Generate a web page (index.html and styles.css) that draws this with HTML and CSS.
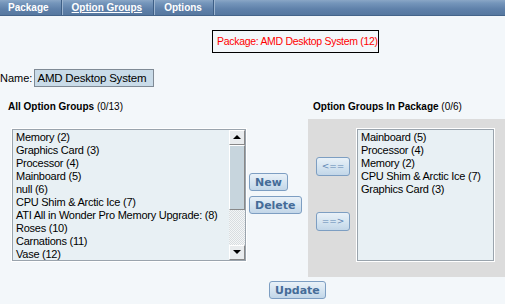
FILE: index.html
```html
<!DOCTYPE html>
<html lang="en">
<head>
    <meta charset="UTF-8">
    <title>Option Groups</title>
    <link rel="stylesheet" href="styles.css">
</head>
<body>
    <div class="tabs">
        <a class="tab">Package</a>
        <a class="tab active">Option Groups</a>
        <a class="tab">Options</a>
    </div>

    <div class="package-box">Package: AMD Desktop System (12)</div>

    <div class="name-row">
        <label for="pkgName">Name:</label>
        <input type="text" id="pkgName" value="AMD Desktop System">
    </div>

    <div class="groups">
        <div class="col-left">
            <h3>All Option Groups <span>(0/13)</span></h3>
            <div class="listbox">
                <ul class="items">
                    <li>Memory (2)</li>
                    <li>Graphics Card (3)</li>
                    <li>Processor (4)</li>
                    <li>Mainboard (5)</li>
                    <li>null (6)</li>
                    <li>CPU Shim &amp; Arctic Ice (7)</li>
                    <li>ATI All in Wonder Pro Memory Upgrade: (8)</li>
                    <li>Roses (10)</li>
                    <li>Carnations (11)</li>
                    <li>Vase (12)</li>
                </ul>
                <div class="scrollbar">
                    <span class="sb-btn up"></span>
                    <span class="sb-thumb"></span>
                    <span class="sb-track"></span>
                    <span class="sb-btn down"></span>
                </div>
            </div>
        </div>

        <div class="col-mid">
            <button class="btn">New</button>
            <button class="btn">Delete</button>
        </div>

        <div class="col-right">
            <h3>Option Groups In Package <span>(0/6)</span></h3>
            <div class="panel">
                <div class="arrows">
                    <button class="btn arrow">&lt;==</button>
                    <button class="btn arrow">==&gt;</button>
                </div>
                <div class="listbox small">
                    <ul class="items">
                        <li>Mainboard (5)</li>
                        <li>Processor (4)</li>
                        <li>Memory (2)</li>
                        <li>CPU Shim &amp; Arctic Ice (7)</li>
                        <li>Graphics Card (3)</li>
                    </ul>
                </div>
            </div>
        </div>
    </div>

    <div class="footer">
        <button class="btn">Update</button>
    </div>
</body>
</html>
```

FILE: styles.css
```css
* {
    margin: 0;
    padding: 0;
    box-sizing: border-box;
}
body {
    background: #f3f7fa;
    font-family: "Liberation Sans", Arial, sans-serif;
    font-size: 11px;
    color: #000;
    width: 505px;
    height: 304px;
    overflow: hidden;
}
.tabs {
    display: flex;
    height: 16px;
    background: linear-gradient(#8aa6c6 0, #7596bb 3px, #5f81aa 9px, #56789f 15px);
    border-bottom: 1px solid #44648a;
}
.tab {
    color: #fff;
    font-weight: bold;
    font-size: 10px;
    line-height: 15px;
    padding: 0 12px 0 8px;
    border-right: 1px solid #3e5f86;
    box-shadow: 1px 0 0 #9db5d0;
}
.tab + .tab {
    padding: 0 11px 0 10px;
}
.tab.active {
    text-decoration: underline;
}
.package-box {
    width: 167px;
    margin: 14px 0 0 212px;
    border: 1px solid #000;
    color: #f00;
    font-size: 10.5px;
    padding: 4px 0 4px 4px;
    line-height: 13px;
    white-space: nowrap;
    letter-spacing: -0.3px;
}
.name-row {
    display: flex;
    align-items: center;
    gap: 2px;
    margin-top: 16px;
}
.name-row input {
    width: 120px;
    height: 18px;
    border: 1px solid #7f8a95;
    background: #c9dbe8;
    font: inherit;
    font-size: 11.5px;
    letter-spacing: -0.2px;
    padding: 0 2px;
}
.groups {
    display: flex;
    margin-top: 14px;
}
h3 {
    font-size: 10px;
    height: 18px;
}
h3 span {
    font-weight: normal;
}
.col-left {
    padding-left: 8px;
    width: 248px;
}
.col-left .listbox {
    margin: 9px 0 0 3px;
}
.listbox {
    display: flex;
    width: 236px;
    height: 134px;
    background: #e8f0f4;
    border: 1px solid #fff;
    outline: 1px solid #9aa4ad;
    outline-offset: -2px;
}
.items {
    list-style: none;
    flex: 1;
    padding: 1px 0 0 3px;
    border: 1px dotted #223;
    border-right: none;
    font-size: 11px;
    letter-spacing: -0.25px;
    line-height: 13px;
    white-space: nowrap;
    overflow: hidden;
}
.listbox.small .items {
    border-right: 1px dotted #223;
}
.scrollbar {
    display: flex;
    flex-direction: column;
    width: 17px;
    border: 1px dotted #223;
    border-left: none;
}
.sb-btn {
    height: 15px;
    background: #e9ecee;
    border: 1px solid #fff;
    border-right-color: #888;
    border-bottom-color: #888;
    position: relative;
}
.sb-btn::after {
    content: "";
    position: absolute;
    left: 3px;
    top: 4px;
    border-left: 4px solid transparent;
    border-right: 4px solid transparent;
}
.sb-btn.up::after {
    border-bottom: 4px solid #000;
}
.sb-btn.down::after {
    border-top: 4px solid #000;
}
.sb-thumb {
    height: 65px;
    background: #c7d5dd;
    border: 1px solid #fff;
    border-right-color: #888;
    border-bottom-color: #888;
}
.sb-track {
    flex: 1;
    background: repeating-conic-gradient(#d8dde0 0 25%, #f4f6f7 0 50%) 0 0 / 2px 2px;
}
.col-mid {
    width: 60px;
    display: flex;
    flex-direction: column;
    align-items: flex-start;
    gap: 5px;
    padding: 72px 0 0 1px;
}
.btn {
    font-family: "DejaVu Sans", sans-serif;
    font-size: 11px;
    font-weight: bold;
    color: #456c98;
    background: linear-gradient(#e9f1f8, #d2e2ef 60%, #c2d6e8);
    border: 1px solid #7d9ec2;
    border-radius: 3px;
    height: 18px;
    padding: 0 5px;
    line-height: 15px;
}
.col-right {
    flex: 1;
}
.col-right h3 {
    padding-left: 5px;
}
.panel {
    display: flex;
    background: #dcdcdc;
    padding: 9px 0 15px 8px;
}
.arrows {
    display: flex;
    flex-direction: column;
    gap: 36px;
    padding-top: 29px;
    width: 40px;
}
.btn.arrow {
    width: 34px;
    height: 19px;
    font-size: 9px;
    font-weight: normal;
    color: #5f86b4;
    padding: 0;
}
.listbox.small {
    width: 139px;
    height: 134px;
}
.footer {
    padding: 4px 0 0 269px;
}
```
